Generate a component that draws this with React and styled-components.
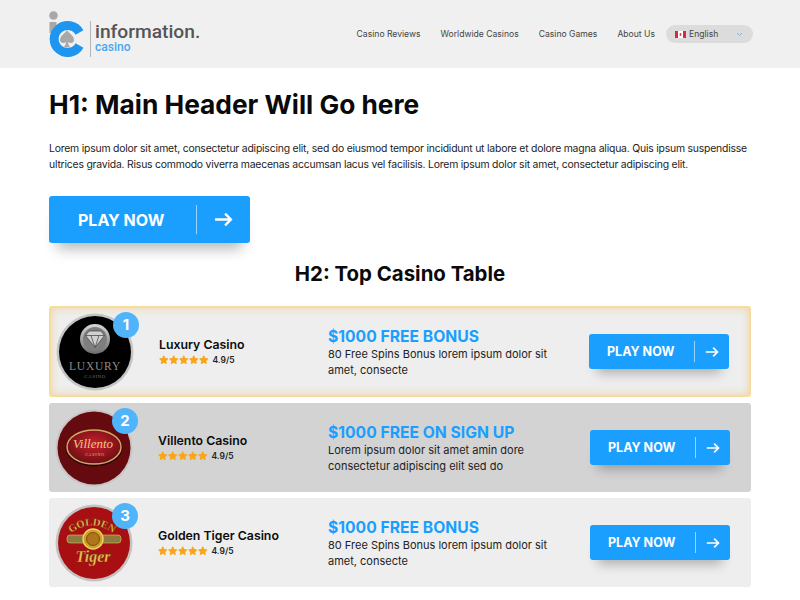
import styled, { createGlobalStyle } from 'styled-components'
import { FaStar } from 'react-icons/fa'

const GlobalStyle = createGlobalStyle`
  * { box-sizing: border-box; }
  html, body { margin: 0; padding: 0; background: #fff; }
  body { font-family: Inter, "Open Sans", sans-serif; color: #111; }
`

const casinos = [
  {
    rank: 1,
    name: 'Luxury Casino',
    bonus: '$1000 FREE BONUS',
    text: '80 Free Spins Bonus lorem ipsum dolor sit amet, consecte',
    logo: 'luxury',
    tone: 'featured',
  },
  {
    rank: 2,
    name: 'Villento Casino',
    bonus: '$1000 FREE ON SIGN UP',
    text: 'Lorem ipsum dolor sit amet amin dore consectetur adipiscing elit sed do',
    logo: 'villento',
    tone: 'dark',
  },
  {
    rank: 3,
    name: 'Golden Tiger Casino',
    bonus: '$1000 FREE BONUS',
    text: '80 Free Spins Bonus lorem ipsum dolor sit amet, consecte',
    logo: 'tiger',
    tone: 'light',
  },
]

const SiteLogo = () => (
  <LogoWrap>
    <svg width="42" height="50" viewBox="0 0 42 50">
      <circle cx="4.5" cy="4.5" r="4.3" fill="#a8a8a8" />
      <rect x="0.5" y="11" width="7" height="11" fill="#a8a8a8" />
      <path
        d="M30.5 21.5 A13.5 13.5 0 1 0 30.5 34.5"
        fill="none"
        stroke="#1e96f0"
        strokeWidth="9"
      />
      <path
        d="M18 19 C20 22.5 25 24.5 25 29 C25 32 21.5 33 19 31 C19.2 33 20 35 21.5 36.5 L14.5 36.5 C16 35 16.8 33 17 31 C14.5 33 11 32 11 29 C11 24.5 16 22.5 18 19 Z"
        fill="#a8a8a8"
      />
    </svg>
    <LogoDivider />
    <LogoText>
      <LogoName>information.</LogoName>
      <LogoSub>casino</LogoSub>
    </LogoText>
  </LogoWrap>
)

const CaFlag = () => (
  <svg width="11" height="7" viewBox="0 0 11 7">
    <rect width="11" height="7" fill="#fff" />
    <rect width="3" height="7" fill="#d52b3c" />
    <rect x="8" width="3" height="7" fill="#d52b3c" />
    <rect x="4.7" y="2.2" width="1.6" height="2.6" fill="#d52b3c" />
  </svg>
)

const Chevron = () => (
  <svg width="7" height="5" viewBox="0 0 7 5">
    <path d="M1 1 L3.5 3.5 L6 1" fill="none" stroke="#7fb4dc" strokeWidth="1" />
  </svg>
)

const Arrow = ({ size }) => (
  <svg width={size} height={size} viewBox="0 0 18 18">
    <path
      d="M1 9 H16 M10.5 3.5 L16 9 L10.5 14.5"
      fill="none"
      stroke="#fff"
      strokeWidth="2.2"
    />
  </svg>
)

const PlayButton = ({ big }) => (
  <Button $big={big}>
    <ButtonLabel $big={big}>PLAY NOW</ButtonLabel>
    <ButtonIcon $big={big}>
      <Arrow size={big ? 19 : 14} />
    </ButtonIcon>
  </Button>
)

const LuxuryArt = () => (
  <svg width="78" height="78" viewBox="0 0 78 78">
    <defs>
      <linearGradient id="silver" x1="0" y1="0" x2="0" y2="1">
        <stop offset="0" stopColor="#d8d8d8" />
        <stop offset="1" stopColor="#6c6c6c" />
      </linearGradient>
    </defs>
    <circle cx="39" cy="39" r="38.5" fill="#c4c4c4" />
    <circle cx="39" cy="39" r="36" fill="#000" />
    <circle cx="39" cy="26" r="15" fill="url(#silver)" />
    <circle cx="39" cy="26" r="12" fill="#7e7e7e" />
    <path d="M29.5 22.5 L33 18 H45 L48.5 22.5 L39 34.5 Z" fill="#d0d0d0" stroke="#4c4c4c" strokeWidth="0.8" />
    <path d="M29.5 22.5 H48.5 M35 22.5 L39 34.5 L43 22.5" fill="none" stroke="#4c4c4c" strokeWidth="0.8" />
    <ArtText x="39" y="57" fontSize="11.5" fill="#8c8c8c" letterSpacing="0.8">LUXURY</ArtText>
    <ArtText x="39" y="65" fontSize="5" fill="#6e6e6e" letterSpacing="0.5">CASINO</ArtText>
  </svg>
)

const VillentoArt = () => (
  <svg width="78" height="78" viewBox="0 0 78 78">
    <defs>
      <radialGradient id="oval" cx="0.5" cy="0.4" r="0.7">
        <stop offset="0" stopColor="#c8202a" />
        <stop offset="1" stopColor="#5c0a10" />
      </radialGradient>
    </defs>
    <circle cx="39" cy="39" r="38.5" fill="#c9c4c4" />
    <circle cx="39" cy="39" r="36.5" fill="#650b10" />
    <ellipse cx="39" cy="39" rx="28.5" ry="18.5" fill="#2a0406" />
    <ellipse cx="39" cy="38" rx="27" ry="17" fill="url(#oval)" stroke="#d2a868" strokeWidth="1.5" />
    <ArtText x="38" y="39" fontSize="13" fill="#e8c88c" fontStyle="italic">Villento</ArtText>
    <ArtText x="40" y="47" fontSize="4" fill="#e8c88c" letterSpacing="0.8">CASINO</ArtText>
  </svg>
)

const TigerArt = () => (
  <svg width="78" height="78" viewBox="0 0 78 78">
    <circle cx="39" cy="39" r="38.5" fill="#c6c2c2" />
    <circle cx="39" cy="39" r="36" fill="#a80f12" />
    <rect x="12" y="31" width="54" height="8" rx="3" fill="#8d7a3e" stroke="#e2c35a" strokeWidth="0.6" />
    <path id="goldenArc" d="M15 30 Q37 13 59 30" fill="none" />
    <text fontFamily="Liberation Serif, serif" fontWeight="700" fontSize="10.5" fill="#ecc34f" stroke="#5a3a08" strokeWidth="0.3">
      <textPath href="#goldenArc" startOffset="50%" textAnchor="middle">GOLDEN</textPath>
    </text>
    <circle cx="38" cy="35" r="10" fill="#caa028" stroke="#f1d566" strokeWidth="1.4" />
    <circle cx="38" cy="35" r="6.5" fill="#b0741a" stroke="#6b3d0c" strokeWidth="0.8" />
    <ArtText x="38" y="58" fontSize="16" fill="#ecc34f" stroke="#5a3a08" strokeWidth="0.3" fontWeight="700" fontStyle="italic">Tiger</ArtText>
  </svg>
)

const arts = { luxury: LuxuryArt, villento: VillentoArt, tiger: TigerArt }

const Stars = () => (
  <StarRow>
    {[0, 1, 2, 3, 4].map((i) => (
      <FaStar key={i} size={9.5} />
    ))}
  </StarRow>
)

const CasinoRow = ({ casino }) => {
  const Art = arts[casino.logo]
  return (
    <Row $tone={casino.tone}>
      <LogoCircle>
        <Art />
        <RankBadge>{casino.rank}</RankBadge>
      </LogoCircle>
      <NameCell>
        <CasinoName>{casino.name}</CasinoName>
        <RatingLine>
          <Stars />
          <RatingValue>4.9/5</RatingValue>
        </RatingLine>
      </NameCell>
      <div>
        <BonusTitle>{casino.bonus}</BonusTitle>
        <BonusText>{casino.text}</BonusText>
      </div>
      <PlayButton />
    </Row>
  )
}

const App = () => (
  <>
    <GlobalStyle />
    <Header>
      <SiteLogo />
      <Nav>
        <NavLink>Casino Reviews</NavLink>
        <NavLink>Worldwide Casinos</NavLink>
        <NavLink>Casino Games</NavLink>
        <NavLink>About Us</NavLink>
        <LangPill>
          <CaFlag />
          <LangName>English</LangName>
          <Chevron />
        </LangPill>
      </Nav>
    </Header>
    <Main>
      <Title>H1: Main Header Will Go here</Title>
      <Intro>
        Lorem ipsum dolor sit amet, consectetur adipiscing elit, sed do eiusmod tempor incididunt ut labore et dolore magna aliqua. Quis ipsum suspendisse ultrices gravida. Risus commodo viverra maecenas accumsan lacus vel facilisis. Lorem ipsum dolor sit amet, consectetur adipiscing elit.
      </Intro>
      <PlayButton big />
      <SubTitle>H2: Top Casino Table</SubTitle>
      <Table>
        {casinos.map((casino) => (
          <CasinoRow key={casino.rank} casino={casino} />
        ))}
      </Table>
    </Main>
  </>
)

export default App

const Header = styled.header`
  height: 68px;
  background: #f0f0f0;
  padding: 11px 47px 0 49px;
  display: flex;
  justify-content: space-between;
`

const LogoWrap = styled.div`
  display: flex;
  align-items: flex-start;
`

const LogoDivider = styled.div`
  width: 1px;
  height: 36px;
  margin: 10px 4px 0 -1px;
  background: #b4b4b4;
`

const LogoText = styled.div`
  display: flex;
  flex-direction: column;
  padding-top: 11px;
`

const LogoName = styled.span`
  font-family: Roboto, sans-serif;
  font-size: 19.2px;
  line-height: 20px;
  font-weight: 500;
  color: #555;
`

const LogoSub = styled.span`
  font-family: Roboto, sans-serif;
  font-size: 12px;
  line-height: 14px;
  margin-top: -2px;
  font-weight: 500;
  color: #4ba6ee;
`

const Nav = styled.nav`
  display: flex;
  align-items: center;
  height: 46px;
`

const NavLink = styled.a`
  font-size: 8.6px;
  color: #444;
  margin-right: 20px;
  &:nth-child(4) { margin-right: 11px; }
`

const LangPill = styled.div`
  width: 87px;
  height: 18px;
  border-radius: 9px;
  background: #dcdcdc;
  display: flex;
  align-items: center;
  padding: 0 10px 0 9px;
`

const LangName = styled.span`
  font-size: 8.6px;
  color: #444;
  margin-left: 3px;
  flex: 1;
`

const Main = styled.main`
  padding: 22px 49px 0;
`

const Title = styled.h1`
  margin: 0;
  font-size: 26.3px;
  line-height: 30px;
  font-weight: 700;
  color: #0a0a0a;
`

const Intro = styled.p`
  margin: 21px 0 0;
  font-size: 10.4px;
  line-height: 15.5px;
  letter-spacing: -0.2px;
  color: #222;
`

const Button = styled.div`
  display: flex;
  align-items: center;
  width: ${(p) => (p.$big ? '201px' : '140px')};
  height: ${(p) => (p.$big ? '47px' : '35px')};
  margin-top: ${(p) => (p.$big ? '24px' : '0')};
  background: #1a9fff;
  border-radius: 3px;
  box-shadow: 0 ${(p) => (p.$big ? '14px 14px -8px' : '12px 12px -8px')} rgba(0, 0, 0, 0.28);
`

const ButtonLabel = styled.span`
  width: ${(p) => (p.$big ? '147px' : '105px')};
  padding-left: ${(p) => (p.$big ? '29px' : '18px')};
  font-size: ${(p) => (p.$big ? '16px' : '12.5px')};
  font-weight: 700;
  color: #fff;
  white-space: nowrap;
`

const ButtonIcon = styled.span`
  flex: 1;
  height: ${(p) => (p.$big ? '29px' : '21px')};
  border-left: 1px solid rgba(255, 255, 255, 0.55);
  display: flex;
  align-items: center;
  justify-content: center;
`

const SubTitle = styled.h2`
  margin: 18px 0 0;
  font-size: 20.4px;
  line-height: 26px;
  font-weight: 700;
  text-align: center;
  color: #0a0a0a;
`

const Table = styled.div`
  margin-top: 19px;
  display: flex;
  flex-direction: column;
  gap: 6px;
`

const Row = styled.div`
  display: grid;
  align-items: center;
  border-radius: 3px;
  ${(p) =>
    p.$tone === 'featured'
      ? `
    height: 91px;
    grid-template-columns: 78px 194px 261px 140px;
    padding-left: 5px;
    border: 2px solid #f8dc9e;
    box-shadow: inset 0 0 8px rgba(240, 190, 90, 0.55);
    background: #eeeeee;
  `
      : `
    height: 89px;
    grid-template-columns: 78px 195px 262px 140px;
    padding-left: 6px;
    background: ${p.$tone === 'dark' ? '#d3d3d3' : '#eeeeee'};
  `}
`

const LogoCircle = styled.div`
  position: relative;
  width: 78px;
  height: 78px;
  svg { display: block; }
`

const ArtText = styled.text.attrs({ textAnchor: 'middle' })`
  font-family: "Liberation Serif", serif;
`

const RankBadge = styled.span`
  position: absolute;
  top: -1px;
  left: 57px;
  width: 26px;
  height: 26px;
  border-radius: 50%;
  background: #50b4fb;
  color: #fff;
  font-size: 15px;
  font-weight: 700;
  display: flex;
  align-items: center;
  justify-content: center;
`

const NameCell = styled.div`
  padding-left: 25px;
  margin-bottom: 2px;
`

const CasinoName = styled.div`
  font-size: 12.3px;
  line-height: 16px;
  font-weight: 600;
  color: #0c0c0c;
  white-space: nowrap;
`

const RatingLine = styled.div`
  display: flex;
  align-items: center;
  gap: 4px;
  margin-top: 2px;
`

const StarRow = styled.span`
  display: flex;
  color: #f9a61a;
  gap: 0.5px;
`

const RatingValue = styled.span`
  font-size: 8.5px;
  font-weight: 600;
  color: #222;
`

const BonusTitle = styled.div`
  font-size: 15.7px;
  line-height: 22px;
  margin-bottom: -2px;
  font-weight: 700;
  color: #1a9fff;
  white-space: nowrap;
`

const BonusText = styled.div`
  font-size: 11px;
  line-height: 16px;
  color: #222;
  width: 232px;
`
